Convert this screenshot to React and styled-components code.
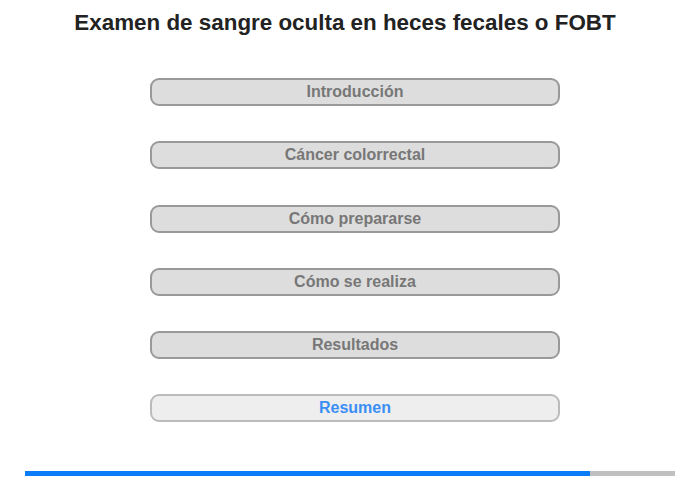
import React from 'react';
import styled, {createGlobalStyle} from 'styled-components';

const GlobalStyle = createGlobalStyle`
  body {
    margin: 0;
    background: #fff;
    font-family: "Liberation Sans", Arial, sans-serif;
  }
`;

// -----------------------------------------------------------------------------

const Page = styled.div`
  width: 700px;
  height: 480px;
  display: flex;
  flex-direction: column;
  box-sizing: border-box;
  padding-top: 9px;
`;

const Title = styled.h1`
  margin: 0 10px 0 0;
  text-align: center;
  font-size: 22.4px;
  font-weight: bold;
  color: #222;
  line-height: 28px;
`;

const Menu = styled.nav`
  display: flex;
  flex-direction: column;
  gap: 35.3px;
  width: 410px;
  margin: 41px 0 0 150px;
`;

const MenuItem = styled.div`
  box-sizing: border-box;
  height: 28px;
  border: 2px solid ${props => (props.$active ? '#bbb' : '#999')};
  border-radius: 9px;
  background: ${props => (props.$active ? '#eee' : '#ddd')};
  color: ${props => (props.$active ? '#3b8ef5' : '#777')};
  font-size: 16px;
  font-weight: bold;
  display: flex;
  align-items: center;
  justify-content: center;
  cursor: pointer;
`;

const Progress = styled.div`
  display: flex;
  height: 5px;
  width: 650px;
  margin: auto 0 4px 25px;
  background: #c0c0c0;
`;

const ProgressFill = styled.div`
  height: 100%;
  background: #0a7cf8;
`;

// -----------------------------------------------------------------------------

const items = [
  'Introducción',
  'Cáncer colorrectal',
  'Cómo prepararse',
  'Cómo se realiza',
  'Resultados',
  'Resumen',
];

const App = () => {
  const current = items.length - 1;
  const percent = (565 / 650) * 100;

  return (
    <Page>
      <GlobalStyle />
      <Title>Examen de sangre oculta en heces fecales o FOBT</Title>
      <Menu>
        {items.map((label, i) => (
          <MenuItem key={label} $active={i === current}>
            {label}
          </MenuItem>
        ))}
      </Menu>
      <Progress>
        <ProgressFill style={{width: `${percent}%`}} />
      </Progress>
    </Page>
  );
};

export default App;
